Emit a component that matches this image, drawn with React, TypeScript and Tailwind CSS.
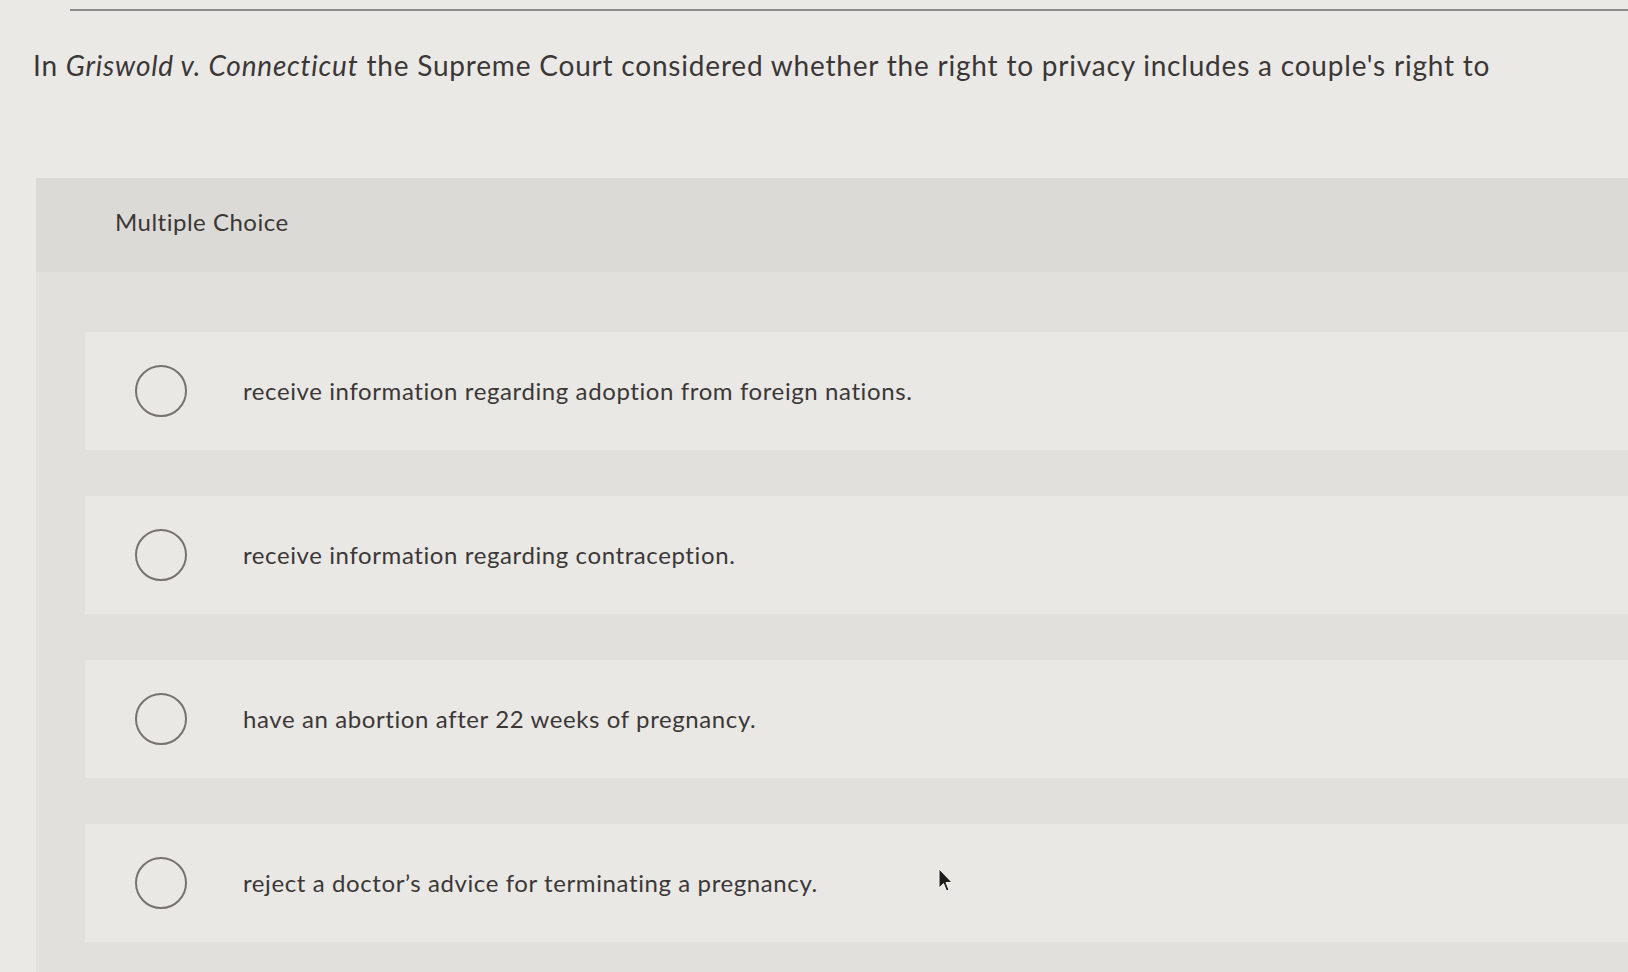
import React from "react";

const options = [
  "receive information regarding adoption from foreign nations.",
  "receive information regarding contraception.",
  "have an abortion after 22 weeks of pregnancy.",
  "reject a doctor\u2019s advice for terminating a pregnancy.",
];

function Radio() {
  return <div className="w-[52px] h-[52px] rounded-full border-2 border-[#76736f] shrink-0" />;
}

function Cursor() {
  return (
    <svg width="18" height="26" viewBox="0 0 18 26" className="absolute left-[937px] top-[868px]">
      <path d="M2 1 L2 20 L6.5 15.5 L9.5 23 L12 22 L9 14.5 L15 14.5 Z" fill="#1c1a1a" stroke="#f4f3f0" strokeWidth="1" />
    </svg>
  );
}

export default function App() {
  return (
    <div
      className="relative w-[1628px] h-[972px] overflow-hidden bg-[#eae9e6] text-[#3b3737]"
      style={{ fontFamily: "Lato, 'Open Sans', sans-serif" }}
    >
      <div className="h-[9px]" />
      <div className="h-[2px] bg-[#8c8b89] ml-[70px]" />

      <div className="pl-[33px] pt-[36px] text-[28px] leading-[36px] tracking-[0.8px]">
        In <i>Griswold v. Connecticut</i> the Supreme Court considered whether the right to privacy includes a couple's right to
      </div>

      <div className="ml-[36px] mt-[95px] bg-[#e2e0dd] h-[800px]">
        <div className="h-[94px] bg-[#dcdad7] flex items-center pl-[79px] pb-[6px] text-[24px] tracking-[0.5px]">
          Multiple Choice
        </div>
        <div className="pl-[49px] pt-[60px] flex flex-col gap-[46px]">
          {options.map((o) => (
            <div key={o} className="h-[118px] bg-[#e9e8e5] flex items-center pl-[50px]">
              <Radio />
              <span className="ml-[56px] text-[24px] tracking-[0.6px]">{o}</span>
            </div>
          ))}
        </div>
      </div>
      <Cursor />
    </div>
  );
}
